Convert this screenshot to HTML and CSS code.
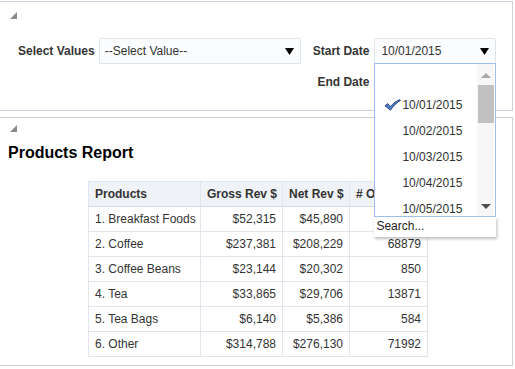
FILE: index.html
```html
<!DOCTYPE html>
<html lang="en">
<head>
    <meta charset="UTF-8">
    <meta name="viewport" content="width=device-width, initial-scale=1.0">
    <title>Products Report</title>
    <link rel="stylesheet" href="styles.css">
</head>
<body>
    <div class="panel filter-panel">
        <svg class="collapse-icon" width="7" height="7" viewBox="0 0 7 7"><polygon points="7,0 7,7 0,7" fill="#8a8a8a"/></svg>
        <div class="filter-grid">
            <span class="field-label">Select Values</span>
            <div class="select-box select-values">
                <span>--Select Value--</span>
                <svg class="select-arrow" width="9" height="7" viewBox="0 0 9 7"><polygon points="0,0 9,0 4.5,7" fill="#000"/></svg>
            </div>
            <span class="field-label date-label">Start Date</span>
            <div class="select-box date-box">
                <span>10/01/2015</span>
                <svg class="select-arrow" width="9" height="7" viewBox="0 0 9 7"><polygon points="0,0 9,0 4.5,7" fill="#000"/></svg>

                <div class="date-popup">
                    <div class="date-list">
                        <ul class="date-items">
                            <li class="date-item"></li>
                            <li class="date-item selected">
                                <svg class="check-icon" width="17" height="12" viewBox="0 0 17 12"><path d="M1 6.8 L3.8 4.6 L6.3 7.6 C9 4.6 12.5 1.8 15.8 0.6 L16.4 1.5 C12.8 3.4 9.4 7 6.4 11.2 Z" fill="#4f80c6" stroke="#1e3d70" stroke-width="0.9" stroke-linejoin="round"/></svg>
                                10/01/2015
                            </li>
                            <li class="date-item">10/02/2015</li>
                            <li class="date-item">10/03/2015</li>
                            <li class="date-item">10/04/2015</li>
                            <li class="date-item">10/05/2015</li>
                        </ul>
                        <div class="fake-scrollbar">
                            <svg class="scroll-up" width="10" height="5" viewBox="0 0 10 5"><polygon points="0,5 10,5 5,0" fill="#a8a8a8"/></svg>
                            <div class="scroll-thumb"></div>
                            <svg class="scroll-down" width="10" height="5" viewBox="0 0 10 5"><polygon points="0,0 10,0 5,5" fill="#505050"/></svg>
                        </div>
                    </div>
                    <div class="date-search">Search...</div>
                </div>
            </div>
            <span class="field-label date-label end-label">End Date</span>
            <div class="select-box date-box"></div>
        </div>
    </div>

    <div class="panel report-panel">
        <svg class="collapse-icon" width="7" height="7" viewBox="0 0 7 7"><polygon points="7,0 7,7 0,7" fill="#8a8a8a"/></svg>
        <p class="report-title">Products Report</p>
        <table class="report-table">
            <tr>
                <th class="product-col">Products</th>
                <th class="gross-col">Gross Rev $</th>
                <th class="net-col">Net Rev $</th>
                <th class="orders-col"># Orders</th>
            </tr>
            <tr><td>1. Breakfast Foods</td><td class="num">$52,315</td><td class="num">$45,890</td><td class="num">24583</td></tr>
            <tr><td>2. Coffee</td><td class="num">$237,381</td><td class="num">$208,229</td><td class="num">68879</td></tr>
            <tr><td>3. Coffee Beans</td><td class="num">$23,144</td><td class="num">$20,302</td><td class="num">850</td></tr>
            <tr><td>4. Tea</td><td class="num">$33,865</td><td class="num">$29,706</td><td class="num">13871</td></tr>
            <tr><td>5. Tea Bags</td><td class="num">$6,140</td><td class="num">$5,386</td><td class="num">584</td></tr>
            <tr><td>6. Other</td><td class="num">$314,788</td><td class="num">$276,130</td><td class="num">71992</td></tr>
        </table>
    </div>
</body>
</html>
```

FILE: styles.css
```css
body {
    margin: 0;
    background-color: white;
    color: #333;
    font-family: "Liberation Sans", Arial, sans-serif;
    font-size: 12px;
}
.panel {
    width: 513px;
    box-sizing: border-box;
    border: 1px solid #c9d1db;
    border-left: none;
}
.collapse-icon {
    display: block;
    margin-left: 10px;
}
.filter-panel {
    margin-top: 1px;
    height: 110px;
    padding-top: 10px;
}
.filter-grid {
    display: grid;
    grid-template-columns: auto 202px auto 122px;
    grid-template-rows: 26px 26px;
    justify-content: start;
    row-gap: 5px;
    margin: 19px 0 0 18px;
    align-items: center;
}
.field-label {
    font-weight: bold;
    text-align: right;
    margin-right: 4px;
}
.date-label {
    margin-left: 12px;
    margin-right: 5px;
}
.end-label {
    grid-column: 3;
}
.select-box {
    position: relative;
    height: 26px;
    box-sizing: border-box;
    display: flex;
    align-items: center;
    justify-content: space-between;
    padding: 0 6px 0 5px;
    background-color: #fbfcfd;
    border: 1px solid #dfe4ea;
    border-radius: 2px;
}
.date-box {
    padding-left: 6px;
}
.select-arrow {
    display: block;
}
.date-popup {
    position: absolute;
    left: -1px;
    top: 24px;
    width: 122px;
    z-index: 5;
}
.date-list {
    position: relative;
    height: 154px;
    box-sizing: border-box;
    border: 1px solid #9fbff2;
    background-color: white;
    overflow: hidden;
}
.date-items {
    list-style: none;
    margin: 0;
    padding: 2px 0 0 0;
}
.date-item {
    position: relative;
    height: 26px;
    line-height: 26px;
    padding-left: 27px;
}
.check-icon {
    position: absolute;
    left: 9px;
    top: 7px;
}
.fake-scrollbar {
    position: absolute;
    top: 0;
    right: 1px;
    bottom: 0;
    width: 17px;
    background-color: #f7f7f7;
}
.scroll-up {
    position: absolute;
    left: 4px;
    top: 9px;
}
.scroll-thumb {
    position: absolute;
    left: 1px;
    right: 0;
    top: 21px;
    height: 38px;
    background-color: #c1c1c1;
}
.scroll-down {
    position: absolute;
    left: 4px;
    bottom: 7px;
}
.date-search {
    height: 20px;
    line-height: 19px;
    padding-left: 2px;
    background-color: white;
    color: #222;
    box-shadow: 1px 2px 3px rgba(0, 0, 0, 0.25);
}
.report-panel {
    margin-top: 6px;
    height: 249px;
    padding-top: 7px;
}
.report-title {
    margin: 12px 0 0 8px;
    font-size: 16px;
    line-height: 18px;
    font-weight: bold;
    color: black;
}
.report-table {
    margin: 19px 0 0 88px;
    width: 339px;
    table-layout: fixed;
    border-collapse: collapse;
    border: 1px solid #ccd5df;
}
.report-table th,
.report-table td {
    height: 24px;
    padding: 0 6px;
    border: 1px solid #e1e6ec;
    white-space: nowrap;
    overflow: hidden;
}
.report-table th {
    text-align: left;
    background-color: #eff2f6;
    border-bottom-color: #d6dde5;
}
.report-table .num {
    text-align: right;
}
.product-col {
    width: 99px;
}
.gross-col {
    width: 69px;
}
.net-col {
    width: 54px;
}
.orders-col {
    width: 65px;
}
```
